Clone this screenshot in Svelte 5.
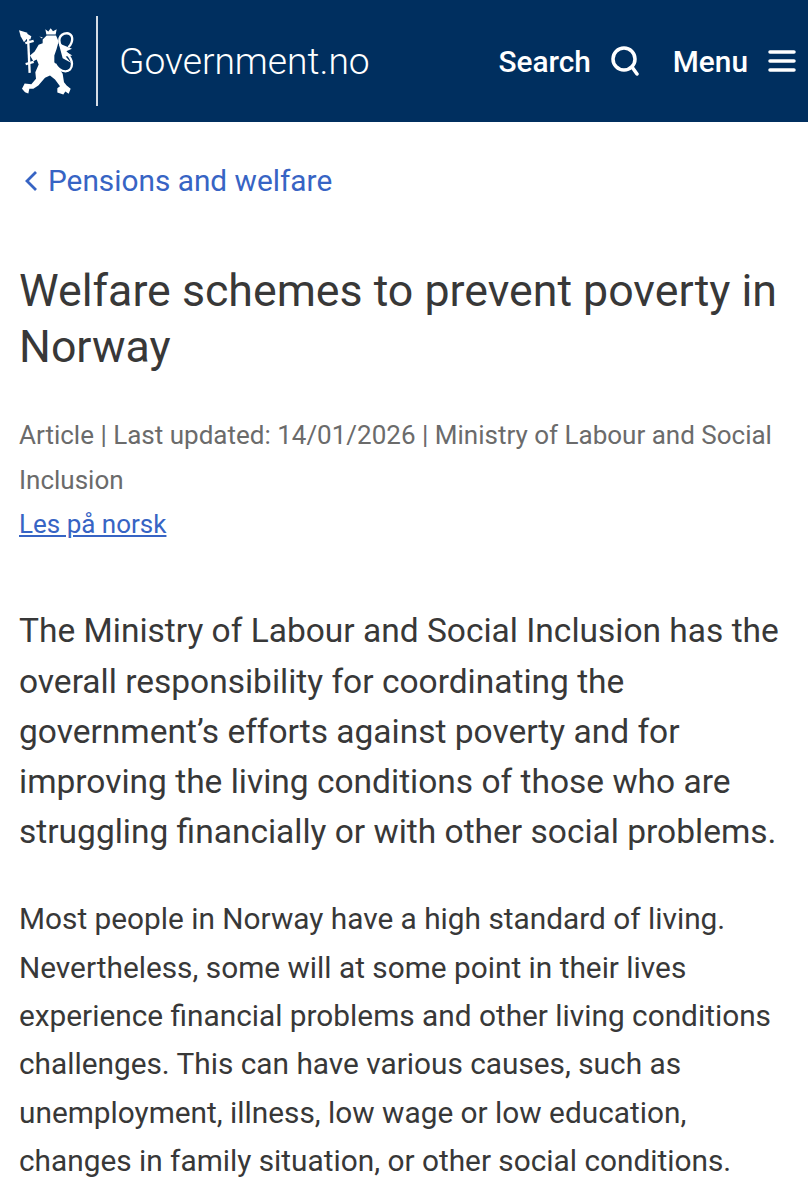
<script>
   const intro = [
      "The Ministry of Labour and Social Inclusion has the",
      "overall responsibility for coordinating the",
      "government’s efforts against poverty and for",
      "improving the living conditions of those who are",
      "struggling financially or with other social problems.",
   ];
   const body = [
      "Most people in Norway have a high standard of living.",
      "Nevertheless, some will at some point in their lives",
      "experience financial problems and other living conditions",
      "challenges. This can have various causes, such as",
      "unemployment, illness, low wage or low education,",
      "changes in family situation, or other social conditions.",
   ];
</script>

<header class="topbar">
   <a class="brand" href="#home">
      <svg class="lion" viewBox="57 88 165 200" width="55" height="67" aria-hidden="true">
         <!-- axe -->
         <path d="M57 94 L82 102 L82 118 L72 130 L62 112 Z" fill="#fff"/>
         <path d="M76 102 L94 112 L91 122 L78 116 Z" fill="#fff"/>
         <path d="M84 112 L89 222" fill="none" stroke="#fff" stroke-width="7"/>
         <path d="M76 133 L101 126 M77 196 L101 189" fill="none" stroke="#fff" stroke-width="7"/>
         <!-- crown -->
         <path d="M139 107 L136 91 L145 98 L152 88 L159 97 L170 91 L167 107 Z" fill="#fff"/>
         <path d="M118 113 L128 116 L126 119 Z" fill="#fff"/>
         <!-- lion body -->
         <path d="M128 122 L140 110 L168 110 L176 128 L170 150 L163 170 L163 190 L175 205 L188 225 L192 250 L200 260 L212 270 L206 285 L196 278 L190 287 L172 281 L172 268 L180 262 L165 242 L150 230 L135 237 L115 260 L100 270 L88 270 L85 284 L75 280 L66 270 L74 254 L94 256 L108 240 L106 220 L116 197 L110 182 L100 187 L90 170 L104 158 L116 138 L128 133 Z" fill="#fff"/>
         <!-- tail -->
         <path d="M165 195 C180 224 216 226 216 195 C216 165 178 155 178 125 C178 105 205 95 215 112 C220 125 212 140 205 145" fill="none" stroke="#fff" stroke-width="7"/>
         <path d="M176 133 L216 150 L197 158 L217 170 L197 173 L213 192 L188 178 Z" fill="#fff"/>
      </svg>
      <span class="divider"></span>
      <span class="siteName">Government.no</span>
   </a>

   <nav class="actions">
      <button class="action">
         <span>Search</span>
         <svg viewBox="0 0 28 30" width="28" height="30" aria-hidden="true">
            <circle cx="13" cy="13" r="11" fill="none" stroke="#fff" stroke-width="3.500"/>
            <path d="M21 21 L26 28" fill="none" stroke="#fff" stroke-width="3.500" stroke-linecap="round"/>
         </svg>
      </button>
      <button class="action">
         <span>Menu</span>
         <svg viewBox="0 0 28 24" width="28" height="24" aria-hidden="true">
            <path d="M2 3 H26 M2 12 H26 M2 21 H26" fill="none" stroke="#fff" stroke-width="3.500" stroke-linecap="round"/>
         </svg>
      </button>
   </nav>
</header>

<main class="page">
   <a class="backLink" href="#pensions">
      <svg viewBox="0 0 14 22" width="14" height="22" aria-hidden="true">
         <path d="M12 2 L3 11 L12 20" fill="none" stroke="#3764c4" stroke-width="2.800"/>
      </svg>
      Pensions and welfare
   </a>

   <h1>Welfare schemes to prevent poverty in Norway</h1>

   <p class="meta">Article | Last updated: 14/01/2026 | Ministry of Labour and Social Inclusion</p>
   <a class="langLink" href="#no">Les på norsk</a>

   <div class="intro">
      {#each intro as line}
         <div>{line}</div>
      {/each}
   </div>

   <div class="body">
      {#each body as line}
         <div>{line}</div>
      {/each}
   </div>
</main>

<style>
   :global(body) {
      background: #fff;
      font-family: Roboto, "Liberation Sans", sans-serif;
      overflow: hidden;
   }

   .topbar {
      height: 122px;
      box-sizing: border-box;
      background: #002f5f;
      display: flex;
      align-items: center;
      justify-content: space-between;
      padding: 0 12px 0 19px;
   }

   .brand {
      display: flex;
      align-items: center;
      color: #fff;
      text-decoration: none;
   }

   .lion {
      display: block;
   }

   .divider {
      width: 2px;
      height: 90px;
      background: #d5dde6;
      margin-left: 22px;
   }

   .siteName {
      font-size: 37.200px;
      font-weight: 300;
      margin-left: 21px;
   }

   .actions {
      display: flex;
      gap: 34px;
   }

   .action {
      display: flex;
      align-items: center;
      gap: 20px;
      background: none;
      border: 0;
      padding: 0;
      color: #fff;
      font: 500 29.800px Roboto, sans-serif;
   }

   .page {
      padding: 0 19px;
   }

   .backLink {
      display: flex;
      align-items: center;
      gap: 10px;
      padding: 41px 0 0 5px;
      font-size: 29.800px;
      line-height: 35px;
      color: #3764c4;
      text-decoration: none;
   }

   h1 {
      margin: 66px 0 0;
      font-size: 44.700px;
      line-height: 55.600px;
      font-weight: 400;
      color: #383838;
   }

   .meta {
      margin: 38px 0 0;
      font-size: 26px;
      line-height: 44.700px;
      color: #6b6b6b;
   }

   .langLink {
      display: block;
      margin-top: -1px;
      font-size: 26px;
      line-height: 44.700px;
      color: #3764c4;
   }

   .intro {
      margin-top: 60px;
      font-size: 33.500px;
      line-height: 50.200px;
      color: #383838;
      white-space: nowrap;
   }

   .body {
      margin-top: 38px;
      font-size: 29.800px;
      line-height: 48.300px;
      color: #383838;
      white-space: nowrap;
   }
</style>
